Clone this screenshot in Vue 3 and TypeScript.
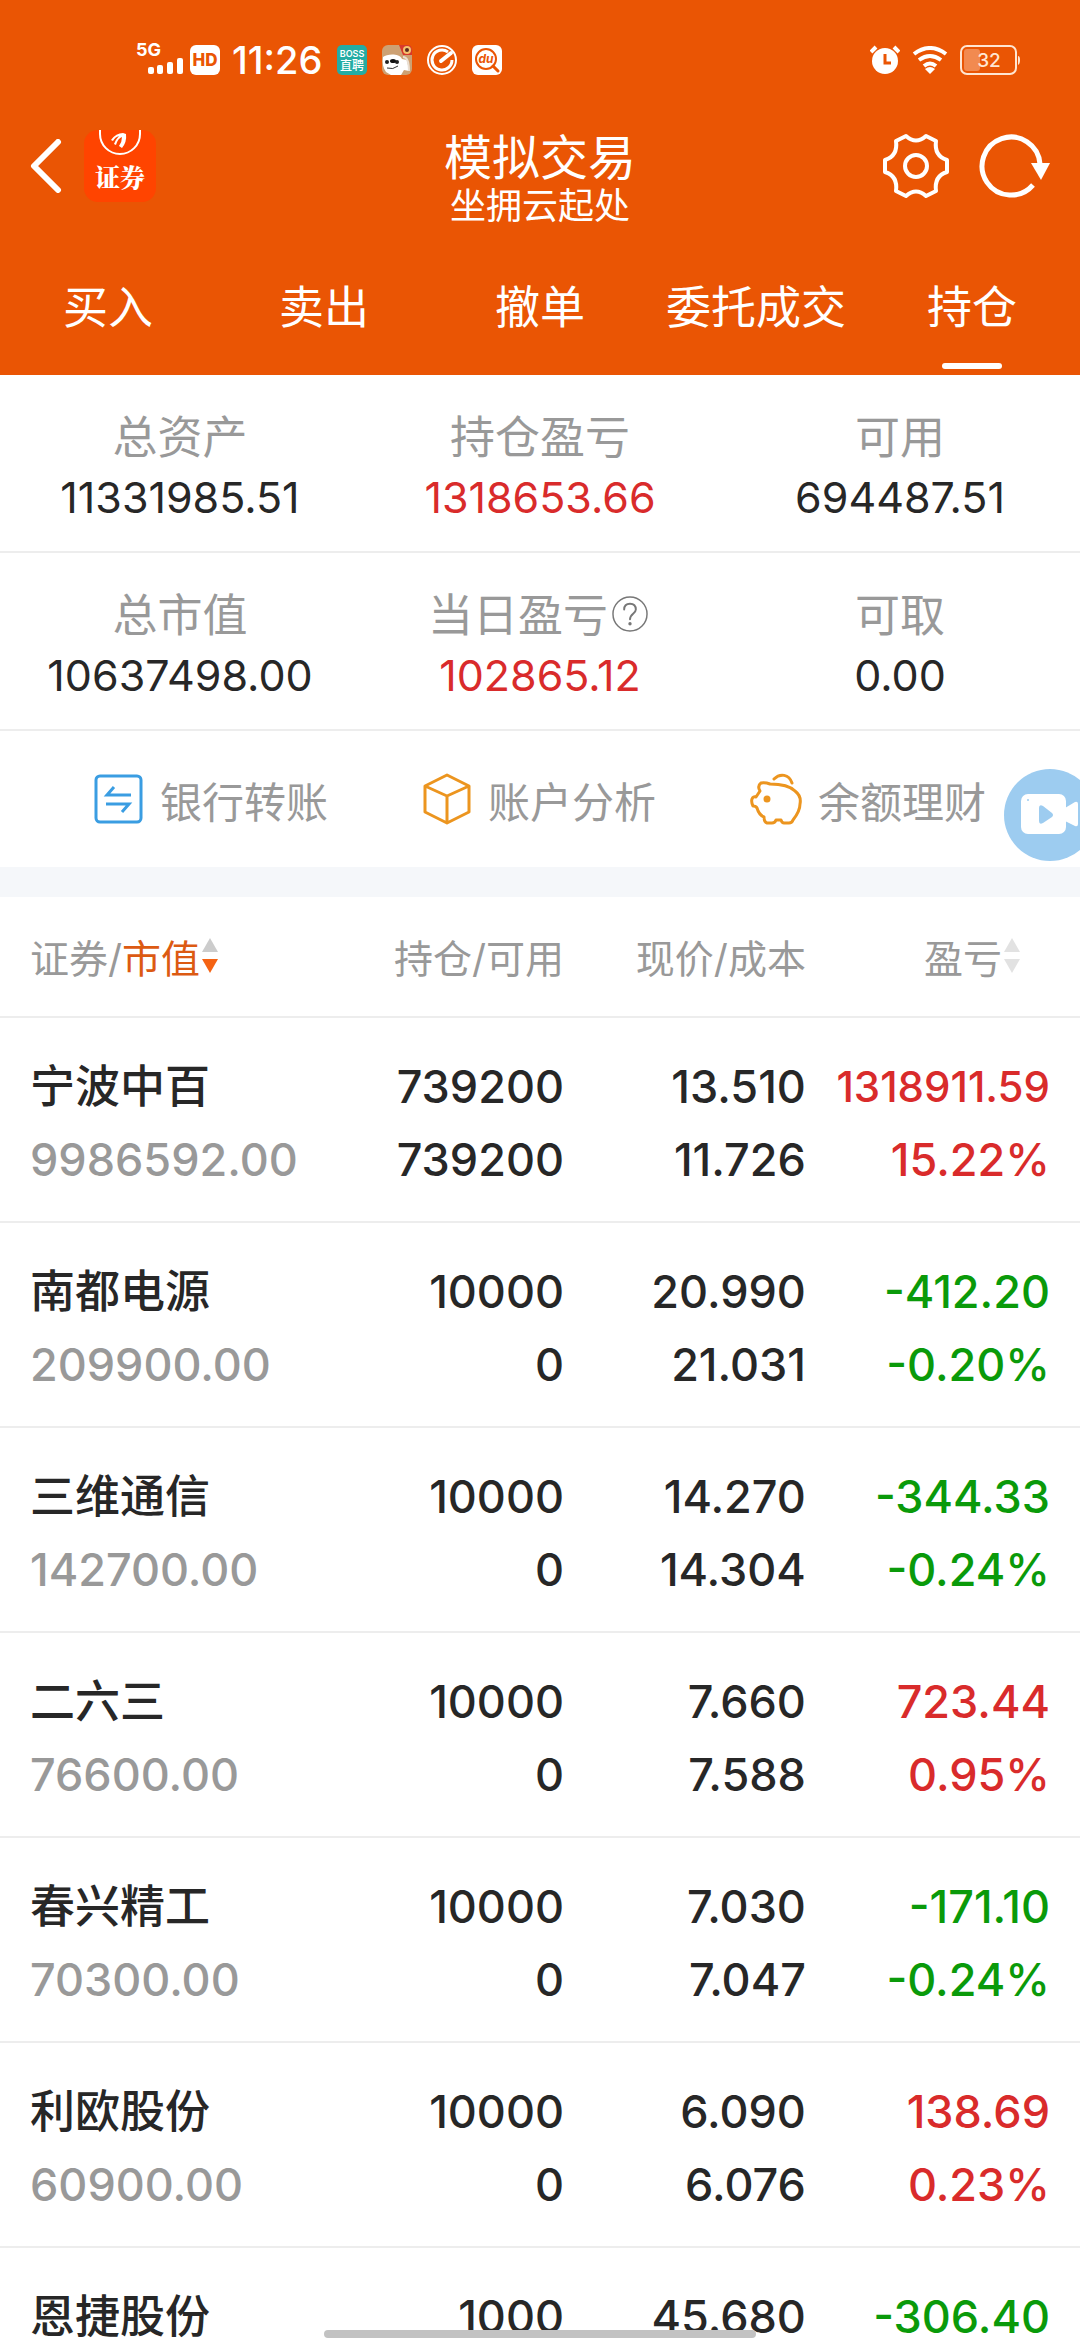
<script setup lang="ts">
interface Holding {
  name: string
  value: string
  held: string
  available: string
  price: string
  cost: string
  profit: string
  rate: string
}

interface Figure {
  label: string
  value: string
  rise?: boolean
  help?: boolean
}

const tabs: string[] = ['买入', '卖出', '撤单', '委托成交', '持仓']
const activeTab = '持仓'

const summary: Figure[][] = [
  [
    { label: '总资产', value: '11331985.51' },
    { label: '持仓盈亏', value: '1318653.66', rise: true },
    { label: '可用', value: '694487.51' },
  ],
  [
    { label: '总市值', value: '10637498.00' },
    { label: '当日盈亏', value: '102865.12', rise: true, help: true },
    { label: '可取', value: '0.00' },
  ],
]

const holdings: Holding[] = [
  { name: '宁波中百', value: '9986592.00', held: '739200', available: '739200', price: '13.510', cost: '11.726', profit: '1318911.59', rate: '15.22%' },
  { name: '南都电源', value: '209900.00', held: '10000', available: '0', price: '20.990', cost: '21.031', profit: '-412.20', rate: '-0.20%' },
  { name: '三维通信', value: '142700.00', held: '10000', available: '0', price: '14.270', cost: '14.304', profit: '-344.33', rate: '-0.24%' },
  { name: '二六三', value: '76600.00', held: '10000', available: '0', price: '7.660', cost: '7.588', profit: '723.44', rate: '0.95%' },
  { name: '春兴精工', value: '70300.00', held: '10000', available: '0', price: '7.030', cost: '7.047', profit: '-171.10', rate: '-0.24%' },
  { name: '利欧股份', value: '60900.00', held: '10000', available: '0', price: '6.090', cost: '6.076', profit: '138.69', rate: '0.23%' },
  { name: '恩捷股份', value: '', held: '1000', available: '', price: '45.680', cost: '', profit: '-306.40', rate: '' },
]

const trend = (h: Holding): string => (h.profit.startsWith('-') ? 'fall' : 'rise')
</script>

<template>
  <div class="app" lang="zh-CN">
    <header class="top">
      <div class="status">
        <div class="status-group">
          <svg class="signal" width="48" height="42" viewBox="0 -8 48 42" fill="#fff">
            <text x="0" y="16" font-size="18" font-weight="700">5G</text>
            <rect x="12" y="27" width="6" height="7" rx="2" />
            <rect x="21" y="25" width="6" height="9" rx="2" />
            <rect x="31" y="22" width="6" height="12" rx="2" />
            <rect x="41" y="18" width="6" height="16" rx="2" />
          </svg>
          <svg class="hd" width="30" height="30" viewBox="0 0 30 30">
            <rect width="30" height="30" rx="6" fill="#fff" />
            <text x="15" y="21" font-size="17" font-weight="800" text-anchor="middle" fill="#ea5504">HD</text>
          </svg>
          <span class="clock">11:26</span>
        </div>
        <div class="status-apps">
          <svg width="30" height="30" viewBox="0 0 30 30" fill="#fff">
            <rect width="30" height="30" rx="5" fill="#24aca4" />
            <text x="15" y="12" font-size="9" font-weight="600" text-anchor="middle">BOSS</text>
            <text x="15" y="25" font-size="12" font-weight="500" text-anchor="middle">直聘</text>
          </svg>
          <svg width="30" height="30" viewBox="0 0 30 30">
            <rect width="30" height="30" rx="6" fill="#cda173" />
            <path d="M1 12C5 9 17 8 20 14L25 15L27 26L22 25L19 30H9L4 27C1 23 0 18 1 12Z" fill="#fff" />
            <path d="M21 12C25 12 27 18 27 26" fill="none" stroke="#eadfd2" stroke-width="2" />
            <circle cx="5" cy="17" r="2" fill="#222" />
            <circle cx="15" cy="17" r="2" fill="#222" />
            <ellipse cx="11" cy="16" rx="3" ry="2" fill="#111" />
            <path d="M5 23Q11 25 16 21" fill="none" stroke="#333" stroke-width="1" />
            <path d="M17 0H26Q30 0 30 6V10H21Z" fill="#d8382b" />
            <circle cx="25" cy="5" r="4" fill="#f5c26d" />
            <circle cx="25" cy="5" r="2" fill="#5b2a20" />
          </svg>
          <svg width="30" height="30" viewBox="0 0 30 30" fill="none" stroke="#fff">
            <circle cx="15" cy="15" r="14" stroke-width="2" />
            <path d="M21 7A10 10 0 1 0 25 15" stroke-width="3" />
            <path d="M14 16L24 8" stroke-width="4" stroke-linecap="round" />
          </svg>
          <svg width="30" height="30" viewBox="0 0 30 30">
            <rect width="30" height="30" rx="6" fill="#fff" />
            <circle cx="14" cy="14" r="10" fill="none" stroke="#ea5504" stroke-width="2" />
            <path d="M21 21L26 26" stroke="#ea5504" stroke-width="3" stroke-linecap="round" />
            <text x="14" y="18" font-size="12" font-weight="700" font-style="italic" text-anchor="middle" fill="#ea5504">du</text>
          </svg>
        </div>
        <div class="status-system">
          <svg width="30" height="30" viewBox="0 0 30 30">
            <circle cx="15" cy="16" r="13" fill="#fff" />
            <path d="M1 7L6 2M29 7L24 2" stroke="#fff" stroke-width="4" />
            <path d="M15 9V18H21" fill="none" stroke="#ea5504" stroke-width="3" />
          </svg>
          <svg width="36" height="28" viewBox="0 0 36 28" fill="none" stroke="#fff" stroke-width="4">
            <path d="M2 8Q18 -4 34 8" />
            <path d="M7 14Q18 6 29 14" />
            <path d="M12 20Q18 15 24 20" />
            <path d="M13 23Q18 19 23 23L18 28Z" fill="#fff" stroke="none" />
          </svg>
          <svg width="60" height="30" viewBox="0 0 60 30">
            <rect x="1" y="1" width="55" height="28" rx="6" fill="none" stroke="#ffe6d2" stroke-width="2" />
            <rect x="4" y="4" width="16" height="22" rx="3" fill="#f28a50" />
            <path d="M58 11Q60 11 60 15T58 20Z" fill="#ffe6d2" />
            <text x="29" y="22" font-size="19" font-weight="500" text-anchor="middle" fill="#ffe6d2">32</text>
          </svg>
        </div>
      </div>

      <div class="bar">
        <div class="bar-side">
          <button class="icon-button" type="button" aria-label="返回">
            <svg width="32" height="54" viewBox="0 0 32 54" fill="none" stroke="#fff" stroke-width="6" stroke-linecap="round" stroke-linejoin="round">
              <path d="M28 3L4 27L28 51" />
            </svg>
          </button>
          <a class="brand" href="#">
            <svg width="44" height="26" viewBox="0 0 44 26" fill="none" stroke="#fff">
              <path d="M2 0V4A20 20 0 0 0 42 4V0" stroke-width="2" />
              <path d="M13 10Q18 3 25 3L28 4Q29 12 24 18L21 16Q24 12 24 7Q20 8 18 15L16 14Q18 9 21 6Q17 7 15 11Z" fill="#fff" stroke="none" />
            </svg>
            <span>证券</span>
          </a>
        </div>
        <div class="titles">
          <h1>模拟交易</h1>
          <p>坐拥云起处</p>
        </div>
        <div class="bar-side end">
          <button class="icon-button" type="button" aria-label="设置">
            <svg width="68" height="68" viewBox="-34 -34 68 68" fill="none" stroke="#fff" stroke-width="4" stroke-linejoin="round">
              <path d="M-10 -30Q0 -21 10 -30L20 -25Q18 -10 31 -6L31 6Q18 10 20 25L10 30Q0 21 -10 30L-20 25Q-18 10 -31 6L-31 -6Q-18 -10 -20 -25Z" />
              <circle r="11" />
            </svg>
          </button>
          <button class="icon-button" type="button" aria-label="刷新">
            <svg width="72" height="66" viewBox="-33 -33 72 66">
              <path d="M22 19A29 29 0 1 1 29 -2" fill="none" stroke="#fff" stroke-width="5" />
              <path d="M20 -3H39L30 14Z" fill="#fff" />
            </svg>
          </button>
        </div>
      </div>

      <nav class="tabs">
        <a v-for="tab in tabs" :key="tab" href="#" :class="{ active: tab === activeTab }">{{ tab }}</a>
      </nav>
    </header>

    <section class="summary">
      <div v-for="(row, i) in summary" :key="i" class="summary-row">
        <dl v-for="item in row" :key="item.label">
          <dt>
            {{ item.label }}
            <svg v-if="item.help" class="help" width="36" height="36" viewBox="0 0 37 37" fill="none" stroke="#777" stroke-width="1.5" stroke-linecap="round">
              <circle cx="18.5" cy="18.5" r="17.5" />
              <path d="M12.5 14Q12.5 8 18.5 8T24.5 14C24.5 18 18.5 18 18.5 24" stroke-width="2" />
              <circle cx="18.5" cy="28.5" r="1" fill="#777" />
            </svg>
          </dt>
          <dd :class="{ rise: item.rise }">{{ item.value }}</dd>
        </dl>
      </div>
    </section>

    <section class="actions">
      <a href="#">
        <svg width="50" height="52" viewBox="0 0 50 52" fill="none" stroke="#3a9de2" stroke-width="3">
          <rect x="2" y="3" width="45" height="46" rx="4" />
          <path d="M37 22H13L20 14M12 31H35L28 39" />
        </svg>
        银行转账
      </a>
      <a href="#">
        <svg width="50" height="52" viewBox="0 0 50 52" fill="none" stroke="#ec951f" stroke-width="3" stroke-linejoin="round">
          <path d="M25 2L47 13V39L25 50L3 39V13ZM3 13L25 23L47 13M25 23V50" />
        </svg>
        账户分析
      </a>
      <a href="#">
        <svg width="52" height="52" viewBox="0 0 52 52" fill="none" stroke="#ec951f" stroke-width="3" stroke-linejoin="round" stroke-linecap="round">
          <path d="M11 10Q15 9 20 11C28 11 39 12 45 18C49 21 51 26 50 31C50 37 47 42 43 47Q42 50 39 50H34Q32 50 31 47H26Q25 50 22 50H17Q14 49 14 44Q9 42 7 35Q6 33 3 33Q1 29 2 26Q3 23 6 24L10 18Q7 13 11 10Z" />
          <path d="M24 6C30 0 39 1 42 10" />
          <circle cx="17" cy="26" r="2" fill="#ec951f" />
        </svg>
        余额理财
      </a>
      <button class="video" type="button" aria-label="视频">
        <svg width="92" height="92" viewBox="0 0 92 92">
          <circle cx="46" cy="46" r="46" fill="#9dccf0" />
          <rect x="17" y="25" width="45" height="40" rx="7" fill="#fff" />
          <path d="M61 39L71 33Q74 32 74 35V55Q74 58 71 57L61 52Z" fill="#fff" />
          <path d="M35 39Q35 35 39 37L48 44Q50 46 48 48L39 54Q35 56 35 52Z" fill="#9dccf0" />
          <circle cx="24" cy="31" r="1" fill="#9dccf0" />
        </svg>
      </button>
    </section>

    <table class="holdings">
      <colgroup>
        <col class="c-name" />
        <col class="c-held" />
        <col class="c-price" />
        <col class="c-profit" />
      </colgroup>
      <thead>
        <tr>
          <th scope="col">
            <button class="sort" type="button">
              证券/<b>市值</b>
              <svg width="16" height="36" viewBox="0 0 16 36">
                <path d="M8 0L16 14H0Z" fill="#ccc" />
                <path d="M8 35L16 21H0Z" fill="#f56313" />
              </svg>
            </button>
          </th>
          <th scope="col">持仓/可用</th>
          <th scope="col">现价/成本</th>
          <th scope="col">
            <button class="sort inset" type="button">
              盈亏
              <svg width="16" height="36" viewBox="0 0 16 36" fill="#e2e2e2">
                <path d="M8 0L16 14H0Z" />
                <path d="M8 35L16 21H0Z" />
              </svg>
            </button>
          </th>
        </tr>
      </thead>
      <tbody>
        <tr v-for="h in holdings" :key="h.name">
          <td><span class="name">{{ h.name }}</span><span class="value">{{ h.value }}</span></td>
          <td><span>{{ h.held }}</span><span>{{ h.available }}</span></td>
          <td><span>{{ h.price }}</span><span>{{ h.cost }}</span></td>
          <td :class="trend(h)">
            <span :class="{ long: h.profit.length > 9 }">{{ h.profit }}</span><span>{{ h.rate }}</span>
          </td>
        </tr>
      </tbody>
    </table>

    <div class="home-bar"></div>
  </div>
</template>

<style>
body {
  margin: 0;
  background: #fff;
}
</style>

<style scoped>
.app {
  height: 100vh;
  overflow: hidden;
  background: #fff;
  color: #272727;
  font-family: Inter, "Noto Sans CJK SC", sans-serif;
}

.app svg {
  display: block;
  flex: none;
}

a {
  color: inherit;
  text-decoration: none;
}

button {
  padding: 0;
  border: 0;
  background: none;
  color: inherit;
  font: inherit;
}

.top {
  background: #ea5504;
  color: #fff;
}

.status {
  display: flex;
  align-items: center;
  height: 120px;
  padding: 0 60px 0 136px;
}

.status-group {
  display: flex;
  align-items: center;
}

.hd {
  margin: 0 12px 0 6px;
}

.signal {
  margin-bottom: 14px;
}

.clock {
  font-size: 38px;
  font-weight: 500;
  line-height: 40px;
}

.status-apps {
  display: flex;
  gap: 15px;
  margin-left: 15px;
}

.status-system {
  display: flex;
  align-items: center;
  gap: 12px;
  margin-left: auto;
}

.bar {
  display: flex;
  align-items: center;
  height: 92px;
  padding: 0 30px;
}

.bar-side {
  display: flex;
  flex: 1;
  align-items: center;
  gap: 22px;
}

.bar-side.end {
  gap: 28px;
  justify-content: flex-end;
}

.brand {
  display: flex;
  flex-direction: column;
  align-items: center;
  width: 72px;
  height: 72px;
  border-radius: 14px;
  background: #ff4400;
  font-family: "Noto Serif CJK SC", "Noto Sans CJK SC", serif;
  font-size: 25px;
  font-weight: 900;
  line-height: 40px;
}

.titles {
  padding-top: 28px;
  text-align: center;
}

.titles h1,
.titles p {
  margin: 0;
  font-weight: 400;
}

.titles h1 {
  font-size: 48px;
  line-height: 52px;
}

.titles p {
  font-size: 36px;
  line-height: 44px;
}

.tabs {
  display: flex;
  height: 163px;
}

.tabs a {
  display: flex;
  flex: 1;
  flex-direction: column;
  align-items: center;
  justify-content: flex-end;
  gap: 25px;
  padding-bottom: 6px;
  font-size: 45px;
  line-height: 60px;
}

.tabs a::after {
  width: 60px;
  height: 6px;
  border-radius: 3px;
  content: "";
}

.tabs a.active::after {
  background: #fff;
}

.summary-row {
  display: flex;
  padding: 33px 0 25px;
  border-bottom: 2px solid #ededed;
}

.summary-row dl {
  flex: 1;
  margin: 0;
  text-align: center;
}

.summary-row dt {
  display: flex;
  align-items: center;
  justify-content: center;
  gap: 4px;
  color: #999;
  font-size: 45px;
  line-height: 60px;
}

.help {
  margin: 0 4px 4px 0;
}

.summary-row dd {
  margin: 0;
  font-size: 43px;
  line-height: 58px;
}

.rise {
  color: #d92b2b;
}

.fall {
  color: #0a9a0a;
}

.actions {
  position: relative;
  display: flex;
  align-items: center;
  justify-content: space-between;
  height: 136px;
  padding: 0 94px;
  border-bottom: 30px solid #f5f7fa;
  color: #999;
  font-size: 42px;
}

.actions a {
  display: flex;
  align-items: center;
  gap: 16px;
}

.video {
  position: absolute;
  top: 38px;
  right: -16px;
}

.holdings {
  width: 100%;
  border-collapse: collapse;
  table-layout: fixed;
}

.c-name {
  width: 30%;
}

.c-held {
  width: 25%;
}

.c-price {
  width: 22.4%;
}

.c-profit {
  width: 22.6%;
}

.holdings th {
  height: 117px;
  padding: 0 30px 2px 0;
  color: #999;
  font-size: 39px;
  font-weight: 400;
  text-align: right;
  white-space: nowrap;
}

.holdings tr {
  border-bottom: 2px solid #ededed;
}

.holdings td {
  padding: 32px 30px 25px 0;
  font-size: 45px;
  font-weight: 500;
  line-height: 73px;
  text-align: right;
  white-space: nowrap;
}

.holdings th:first-child,
.holdings td:first-child {
  padding-right: 0;
  padding-left: 30px;
  text-align: left;
}

.holdings td span {
  display: block;
  height: 73px;
}

.holdings td .value {
  color: #999;
}

.holdings td .long {
  font-size: 42px;
}

.sort {
  display: inline-flex;
  align-items: center;
}

.sort b {
  color: #dc5a12;
  font-weight: 400;
}

.sort svg {
  margin-left: 2px;
}

.sort.inset {
  margin-right: 30px;
}

.home-bar {
  position: fixed;
  bottom: 2px;
  left: 30%;
  width: 40%;
  height: 8px;
  border-radius: 4px;
  background: #c2c2c2;
}
</style>
